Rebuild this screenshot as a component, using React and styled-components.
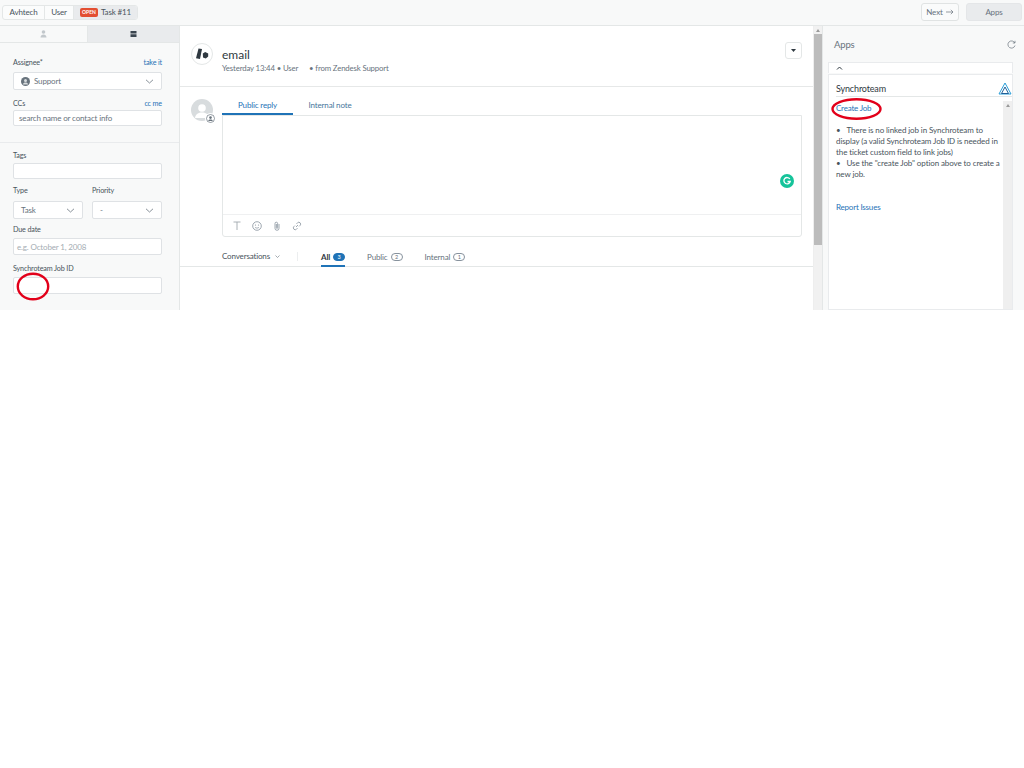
import React from 'react';
import styled, { createGlobalStyle } from 'styled-components';

const Global = createGlobalStyle`
  html, body { margin: 0; padding: 0; background: #fff; }
  body { font-family: Lato, "Open Sans", sans-serif; font-size: 8px; letter-spacing: -0.15px; color: #49545c; }
  * { box-sizing: border-box; }
`;
const Page = styled.div`width: 1024px; height: 310px; overflow: hidden; display: flex; flex-direction: column; background: #fff;`;
const TopBar = styled.div`height: 26px; flex: none; display: flex; align-items: center; justify-content: space-between; background: #f8f9f9; border-bottom: 1px solid #e4e7e7; padding: 0 2px 1px 2px;`;
const Crumbs = styled.div`display: flex; height: 15px; border: 1px solid #e4e7e7; border-radius: 3px; background: #fbfcfc; overflow: hidden;`;
const Crumb = styled.div`display: flex; align-items: center; justify-content: center; gap: 3px; width: ${p => p.$w}px; border-left: ${p => p.$first ? 'none' : '1px solid #e4e7e7'}; background: ${p => p.$active ? '#e9ebed' : 'transparent'}; color: #49545c; line-height: 1;`;
const OpenBadge = styled.span`background: #e34f32; color: #fff; font-size: 5px; font-weight: 700; border-radius: 2px; padding: 2px; line-height: 5px; letter-spacing: 0;`;
const TopActions = styled.div`display: flex; gap: 7px;`;
const NextBtn = styled.div`width: 38px; height: 18px; border: 1px solid #e0e3e3; border-radius: 3px; display: flex; align-items: center; justify-content: center; gap: 3px; color: #68737d; background: #fafbfb;`;
const AppsBtn = styled.div`width: 56px; height: 18px; border-radius: 3px; background: #e9ebed; border: 1px solid #e4e6e8; display: flex; align-items: center; justify-content: center; color: #68737d;`;
const Body = styled.div`flex: 1; display: flex; min-height: 0;`;
const Left = styled.div`width: 180px; flex: none; background: #f8f9f9; border-right: 1px solid #e4e7e7;`;
const LeftTabs = styled.div`display: flex; height: 17px; border-bottom: 1px solid #e4e7e7;`;
const LeftTab = styled.div`flex: none; width: ${p => p.$w}px; display: flex; align-items: center; justify-content: center; background: ${p => p.$active ? '#e9ebed' : '#f8f9f9'}; border-left: ${p => p.$active ? '1px solid #e4e7e7' : 'none'};`;
const Section = styled.div`padding: ${p => p.$pad}; border-bottom: ${p => p.$line ? '1px solid #e9ebed' : 'none'}; height: ${p => p.$h ? p.$h + 'px' : 'auto'};`;
const LabelRow = styled.div`display: flex; justify-content: space-between; align-items: center; height: 11px; padding-top: 1px; margin-top: ${p => p.$mt || 0}px; margin-bottom: ${p => p.$mb ?? 3}px; color: #49545c; font-size: 7.2px;`;
const SmallLink = styled.span`color: #1f73b7; font-size: 7.2px;`;
const Field = styled.div`height: ${p => p.$h || 17}px; background: #fff; border: 1px solid #dfe2e5; border-radius: 2px; display: flex; align-items: center; justify-content: space-between; padding: 0 ${p => p.$px || 5}px; color: ${p => p.$ph ? '#a5adb3' : '#68737d'}; flex: 1; min-width: 0;`;
const Inline = styled.div`display: flex; align-items: center; gap: 4px;`;
const TwoCol = styled.div`display: flex; gap: 9px;`;
const Col = styled.div`width: ${p => p.$w}px; flex: none;`;
const Center = styled.div`width: 633px; flex: none; display: flex; flex-direction: column;`;
const Header = styled.div`height: 61px; flex: none; border-bottom: 1px solid #e6e8e8; display: flex; padding: 17px 11px 0 11px;`;
const LogoCircle = styled.div`width: 22px; height: 22px; border-radius: 50%; border: 1px solid #e4e7e7; display: flex; align-items: center; justify-content: center; flex: none;`;
const HeadText = styled.div`margin-left: 9px; display: flex; flex-direction: column; padding-top: 6px;`;
const Title = styled.div`font-size: 12px; letter-spacing: 0; color: #2f3941; line-height: 12px;`;
const Meta = styled.div`font-size: 7.800px; color: #68737d; line-height: 10px; margin-top: 2px; white-space: pre;`;
const CaretBtn = styled.div`width: 17px; height: 17px; border: 1px solid #e4e7e7; border-radius: 3px; margin-left: auto; margin-top: -1px; display: flex; align-items: center; justify-content: center;`;
const Composer = styled.div`display: flex; padding: 11px 11px 0 11px; flex: none;`;
const AvatarWrap = styled.div`width: 22px; height: 22px; position: relative; flex: none; margin-top: 1px;`;
const Avatar = styled.div`width: 22px; height: 22px; border-radius: 50%; background: #d8dcde; overflow: hidden;`;
const MiniBadge = styled.div`position: absolute; right: -3px; bottom: -3px; width: 11px; height: 11px; border-radius: 50%; background: #fff; display: flex; align-items: center; justify-content: center;`;
const Editor = styled.div`margin-left: 9px; width: 580px;`;
const ReplyTabs = styled.div`display: flex; height: 17px;`;
const ReplyTab = styled.div`width: ${p => p.$w}px; text-align: center; line-height: 15px; color: ${p => p.$active ? '#1f73b7' : '#49769b'}; border-bottom: ${p => p.$active ? '2px solid #1f73b7' : 'none'}; height: 17px;`;
const EditorBox = styled.div`height: 122px; border: 1px solid #e4e7e7; border-radius: 0 0 3px 3px; display: flex; flex-direction: column;`;
const EditorArea = styled.div`height: 99px; flex: none; border-bottom: 1px solid #eff0f1; position: relative;`;
const Grammarly = styled.div`position: absolute; right: 7px; top: 58px; width: 14px; height: 14px; border-radius: 50%; background: #15c39a; display: flex; align-items: center; justify-content: center;`;
const Toolbar = styled.div`display: flex; align-items: center; gap: 10px; padding: 0 9px; flex: 1; color: #8c959c;`;
const FilterBar = styled.div`height: 30px; flex: none; border-bottom: 1px solid #e4e7e7; padding-left: 42px; display: flex; align-items: center; padding-top: 12px;`;
const ConvLabel = styled.div`display: flex; align-items: center; gap: 5px; width: 76px; color: #49545c; border-right: 1px solid #eceeef; height: 9px; margin-top: -3px;`;
const FilterTab = styled.div`display: flex; align-items: center; gap: 3px; height: 18px; margin-left: ${p => p.$ml}px; color: ${p => p.$active ? '#2f3941' : '#68737d'}; font-weight: ${p => p.$active ? 700 : 400}; border-bottom: ${p => p.$active ? '2px solid #1f73b7' : 'none'}; padding-bottom: ${p => p.$active ? 0 : 2}px;`;
const Pill = styled.span`width: 12px; height: 8px; line-height: 7px; font-size: 5.5px; text-align: center; border-radius: 4px; background: ${p => p.$solid ? '#1f73b7' : '#fff'}; color: ${p => p.$solid ? '#fff' : '#68737d'}; border: 1px solid ${p => p.$solid ? '#1f73b7' : '#87929d'}; font-weight: 400;`;
const Scrollbar = styled.div`width: 9px; flex: none; background: #f1f1f1; display: flex; flex-direction: column; align-items: center; border-left: 1px solid #eee;`;
const ScrollArrow = styled.div`width: 0; height: 0; border-left: 2.5px solid transparent; border-right: 2.5px solid transparent; border-bottom: 3px solid #9a9a9a; margin: 3px 0 2px;`;
const Thumb = styled.div`width: 8px; height: ${p => p.$h}px; background: #bcbcbc;`;
const Right = styled.div`flex: 1; background: #f8f9f9; border-left: 1px solid #e4e7e7; padding: 0 10px 0 5px; display: flex; flex-direction: column;`;
const AppsHead = styled.div`height: 36px; flex: none; display: flex; align-items: center; justify-content: space-between; padding: 1px 7px 0 6px; font-size: 9.500px; color: #68737d; width: 195px;`;
const Collapse = styled.div`height: 11px; flex: none; background: #fff; border: 1px solid #e9ebed; border-bottom: none; display: flex; padding-left: 7px; align-items: center; width: 185px;`;
const AppCard = styled.div`flex: 1; margin-top: 1px; background: #fff; border: 1px solid #e9ebed; display: flex; flex-direction: column; width: 185px;`;
const AppTitle = styled.div`height: 22px; margin-left: 7px; flex: none; display: flex; align-items: center; justify-content: space-between; font-size: 9px; color: #2f3941; border-bottom: 1px solid #e4e7e7; padding-top: 6px;`;
const AppBody = styled.div`flex: 1; display: flex; min-height: 0; margin-top: 4px;`;
const AppText = styled.div`flex: 1; padding: 2px 0 0 7px; line-height: 11px; letter-spacing: -0.1px; color: #49545c;`;
const Bullet = styled.div`color: #49545c;`;
const AppLink = styled.div`color: #1f73b7; letter-spacing: -0.2px; margin-top: ${p => p.$mt || 0}px; margin-bottom: ${p => p.$mb || 0}px;`;
const InnerBar = styled.div`width: 9px; flex: none; background: #efefef; display: flex; justify-content: center;`;
const Ring = styled.svg`position: absolute; left: ${p => p.$x}px; top: ${p => p.$y}px; pointer-events: none;`;
const Chevron = () => <svg width="9" height="5" viewBox="0 0 9 5"><path d="M1 .8l3.5 3.2L8 .8" fill="none" stroke="#68737d" strokeWidth=".8"/></svg>;

export default function App() {
  return (
    <>
      <Global />
      <Page>
        <TopBar>
          <Crumbs>
            <Crumb $first $w={41}>Avhtech</Crumb>
            <Crumb $w={29}>User</Crumb>
            <Crumb $active $w={64}><OpenBadge>OPEN</OpenBadge>Task #11</Crumb>
          </Crumbs>
          <TopActions>
            <NextBtn>Next <svg width="8" height="6" viewBox="0 0 8 6"><path d="M0 3h7M4.800.8L7 3 4.800 5.200" fill="none" stroke="#68737d" strokeWidth=".7"/></svg></NextBtn>
            <AppsBtn>Apps</AppsBtn>
          </TopActions>
        </TopBar>
        <Body>
          <Left>
            <LeftTabs>
              <LeftTab $w={87}><svg width="7" height="8" viewBox="0 0 7 8"><circle cx="3.500" cy="2" r="1.800" fill="#c2c8cc"/><path d="M.5 7.500c0-2 1.500-3 3-3s3 1 3 3z" fill="#c2c8cc"/></svg></LeftTab>
              <LeftTab $w={92} $active><svg width="7" height="6" viewBox="0 0 7 6"><path d="M.5 0h6v2.500h-6zM.5 3.200h6V6h-6z" fill="#3b4650"/></svg></LeftTab>
            </LeftTabs>
            <Section $pad="13px 17px 0 13px" $line $h={100}>
              <LabelRow $mb={5}>Assignee*<SmallLink>take it</SmallLink></LabelRow>
              <Field $h={18} $px={7}>
                <Inline>
                  <svg width="9" height="9" viewBox="0 0 9 9"><circle cx="4.500" cy="4.500" r="4.500" fill="#68737d"/><circle cx="4.500" cy="3.500" r="1.500" fill="#d8dcde"/><path d="M1.800 7.500c.5-1.500 1.500-2 2.700-2s2.200.5 2.700 2z" fill="#d8dcde"/></svg>
                  Support
                </Inline>
                <Chevron />
              </Field>
              <LabelRow $mt={7} $mb={2}>CCs<SmallLink>cc me</SmallLink></LabelRow>
              <Field $h={16}>search name or contact info</Field>
            </Section>
            <Section $pad="6px 17px 0 13px">
              <LabelRow $mb={3}>Tags</LabelRow>
              <Field $h={16} />
              <TwoCol>
                <Col $w={70}>
                  <LabelRow $mt={5} $mb={6}>Type</LabelRow>
                  <Field $h={18} $px={7}>Task<Chevron /></Field>
                </Col>
                <Col $w={70}>
                  <LabelRow $mt={5} $mb={6}>Priority</LabelRow>
                  <Field $h={18} $px={7}>-<Chevron /></Field>
                </Col>
              </TwoCol>
              <LabelRow $mt={4} $mb={4}>Due date</LabelRow>
              <Field $h={17} $px={3} $ph>e.g. October 1, 2008</Field>
              <LabelRow $mt={7} $mb={4}>Synchroteam Job ID</LabelRow>
              <Field $h={17} />
            </Section>
          </Left>
          <Center>
            <Header>
              <LogoCircle>
                <svg width="14" height="12" viewBox="0 0 14 12"><path d="M3.500 .5L7 1 5 11 1 10.300z" fill="#2f3941"/><path d="M7.800 5.500l2.400-1.500 3 1.500v3l-2.400 2-2.800-1z" fill="#2f3941"/></svg>
              </LogoCircle>
              <HeadText>
                <Title>email</Title>
                <Meta>{'Yesterday 13:44 • User      • from Zendesk Support'}</Meta>
              </HeadText>
              <CaretBtn><svg width="5" height="3" viewBox="0 0 5 3"><path d="M0 0h5L2.500 3z" fill="#2f3941"/></svg></CaretBtn>
            </Header>
            <Composer>
              <AvatarWrap>
                <Avatar>
                  <svg width="22" height="22" viewBox="0 0 22 22"><circle cx="11" cy="9" r="3.800" fill="#fff"/><path d="M4 19c.5-4 3.500-5.500 7-5.500s6.500 1.500 7 5.500z" fill="#fff"/></svg>
                </Avatar>
                <MiniBadge>
                  <svg width="9" height="9" viewBox="0 0 9 9"><circle cx="4.500" cy="4.500" r="4" fill="none" stroke="#68737d" strokeWidth=".7"/><circle cx="4.500" cy="3.600" r="1.300" fill="#68737d"/><path d="M2.200 7c.3-1.200 1.200-1.600 2.300-1.600S6.500 5.800 6.800 7z" fill="#68737d"/></svg>
                </MiniBadge>
              </AvatarWrap>
              <Editor>
                <ReplyTabs>
                  <ReplyTab $w={71} $active>Public reply</ReplyTab>
                  <ReplyTab $w={74}>Internal note</ReplyTab>
                </ReplyTabs>
                <EditorBox>
                  <EditorArea>
                    <Grammarly>
                      <svg width="10" height="10" viewBox="0 0 10 10"><path d="M7.800 3A3.200 3.200 0 1 0 8.200 5.500H5.500" fill="none" stroke="#fff" strokeWidth="1.300"/></svg>
                    </Grammarly>
                  </EditorArea>
                  <Toolbar>
                    <svg width="10" height="9" viewBox="0 0 10 9"><path d="M1.500 1h7M5 1v8" fill="none" stroke="#a0a8ae" strokeWidth=".9"/></svg>
                    <svg width="10" height="10" viewBox="0 0 10 10"><circle cx="5" cy="5" r="4.300" fill="none" stroke="#87929d" strokeWidth=".8"/><circle cx="3.500" cy="4" r=".6" fill="#87929d"/><circle cx="6.500" cy="4" r=".6" fill="#87929d"/><path d="M3 6.200c.8 1.200 3.200 1.200 4 0" fill="none" stroke="#87929d" strokeWidth=".7"/></svg>
                    <svg width="10" height="10" viewBox="-1.500 0 10 10"><path d="M5.500 3v4.300a2 2 0 0 1-4 0V2.500a1.300 1.300 0 0 1 2.600 0v4.300a.6.6 0 0 1-1.200 0V3" fill="none" stroke="#87929d" strokeWidth=".8"/></svg>
                    <svg width="10" height="10" viewBox="0 0 10 10"><path d="M4 6l2-2M4.500 2.800l1-1a1.800 1.800 0 0 1 2.600 2.600l-1 1M5.500 7.200l-1 1a1.800 1.800 0 0 1-2.600-2.600l1-1" fill="none" stroke="#87929d" strokeWidth=".8"/></svg>
                  </Toolbar>
                </EditorBox>
              </Editor>
            </Composer>
            <FilterBar>
              <ConvLabel>Conversations <svg width="5" height="3" viewBox="0 0 5 3"><path d="M.5.500l2 2 2-2" fill="none" stroke="#68737d" strokeWidth=".6"/></svg></ConvLabel>
              <FilterTab $ml={23} $active>All <Pill $solid>3</Pill></FilterTab>
              <FilterTab $ml={22}>Public <Pill>2</Pill></FilterTab>
              <FilterTab $ml={22}>Internal <Pill>1</Pill></FilterTab>
            </FilterBar>
          </Center>
          <Scrollbar><ScrollArrow /><Thumb $h={211} /></Scrollbar>
          <Right>
            <AppsHead>
              Apps
              <svg width="9" height="9" viewBox="0 0 9 9"><path d="M7.800 3A3.600 3.600 0 1 0 8 5.500M8 .8V3H5.800" fill="none" stroke="#68737d" strokeWidth=".7"/></svg>
            </AppsHead>
            <Collapse><svg width="7" height="4" viewBox="0 0 7 4"><path d="M1 3.500l2.500-2.500L6 3.500" fill="none" stroke="#2f3941" strokeWidth="1"/></svg></Collapse>
            <AppCard>
              <AppTitle>
                Synchroteam
                <svg width="14" height="13" viewBox="0 0 14 13"><path d="M7 1L1 12h12z" fill="none" stroke="#2b9fd9" strokeWidth="1"/><path d="M7 5l-3.500 6.500h7z" fill="none" stroke="#1f5f99" strokeWidth="1"/></svg>
              </AppTitle>
              <AppBody>
                <AppText>
                  <AppLink $mb={11}>Create Job</AppLink>
                  <Bullet>{'•\u2003There is no linked job in Synchroteam to display (a valid Synchroteam Job ID is needed in the ticket custom field to link jobs)'}</Bullet>
                  <Bullet>{'•\u2003Use the "create Job" option above to create a new job.'}</Bullet>
                  <AppLink $mt={22}>Report Issues</AppLink>
                </AppText>
                <InnerBar><ScrollArrow /></InnerBar>
              </AppBody>
            </AppCard>
          </Right>
        </Body>
      </Page>
      <Ring $x={16} $y={272} width="34" height="29" viewBox="0 0 34 29"><ellipse cx="17" cy="14.500" rx="15.200" ry="12.800" fill="none" stroke="#e2001a" strokeWidth="2.400"/></Ring>
      <Ring $x={831} $y={97} width="51" height="24" viewBox="0 0 51 24"><ellipse cx="25.500" cy="12" rx="24" ry="9.800" fill="none" stroke="#e2001a" strokeWidth="2.400"/></Ring>
    </>
  );
}
